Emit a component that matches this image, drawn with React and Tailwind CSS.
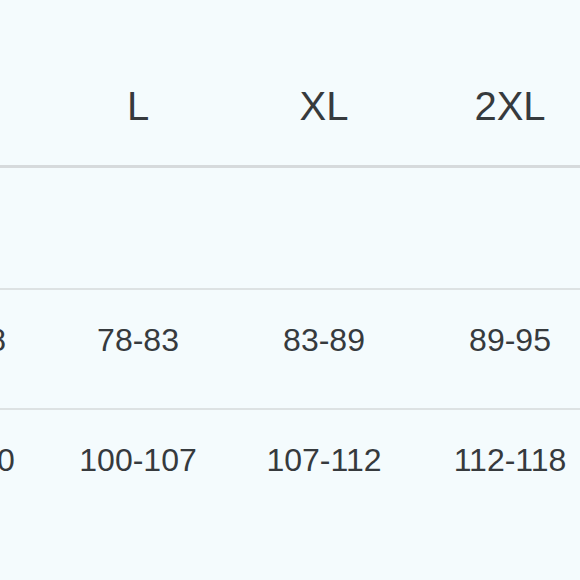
import React from 'react';

const cols = ['M', 'L', 'XL', '2XL'];

const rows = [
    ['', '', '', ''],
    ['73-78', '78-83', '83-89', '89-95'],
    ['93-100', '100-107', '107-112', '112-118'],
];

const widths = ['w-[160px]', 'w-[186px]', 'w-[186px]', 'w-[186px]'];

const App = () => {
    return (
        <div
            className="w-[580px] h-[580px] overflow-hidden bg-[#f4fbfd] text-[#363a3d] pt-[45px]"
            style={{ fontFamily: '"Liberation Sans", Arial, sans-serif' }}
        >
            <div className="ml-[-115px] w-[718px]">
                {/* header */}
                <div className="flex h-[123px] border-b-[3px] border-[#d6dadc] pt-[41px]">
                    {cols.map((c, i) => (
                        <div key={c} className={`${widths[i]} shrink-0 text-center text-[40px] leading-none`}>
                            {c}
                        </div>
                    ))}
                </div>

                {/* body */}
                {rows.map((row, r) => (
                    <div
                        key={r}
                        className={`flex ${r < rows.length - 1 ? 'border-b-2 border-[#dde2e3]' : ''} ${r === 0 ? 'h-[122px]' : 'h-[120px] pt-[34px]'}`}
                    >
                        {row.map((v, i) => (
                            <div key={i} className={`${widths[i]} shrink-0 text-center text-[32px] leading-none`}>
                                {v}
                            </div>
                        ))}
                    </div>
                ))}
            </div>
        </div>
    );
};

export default App;
